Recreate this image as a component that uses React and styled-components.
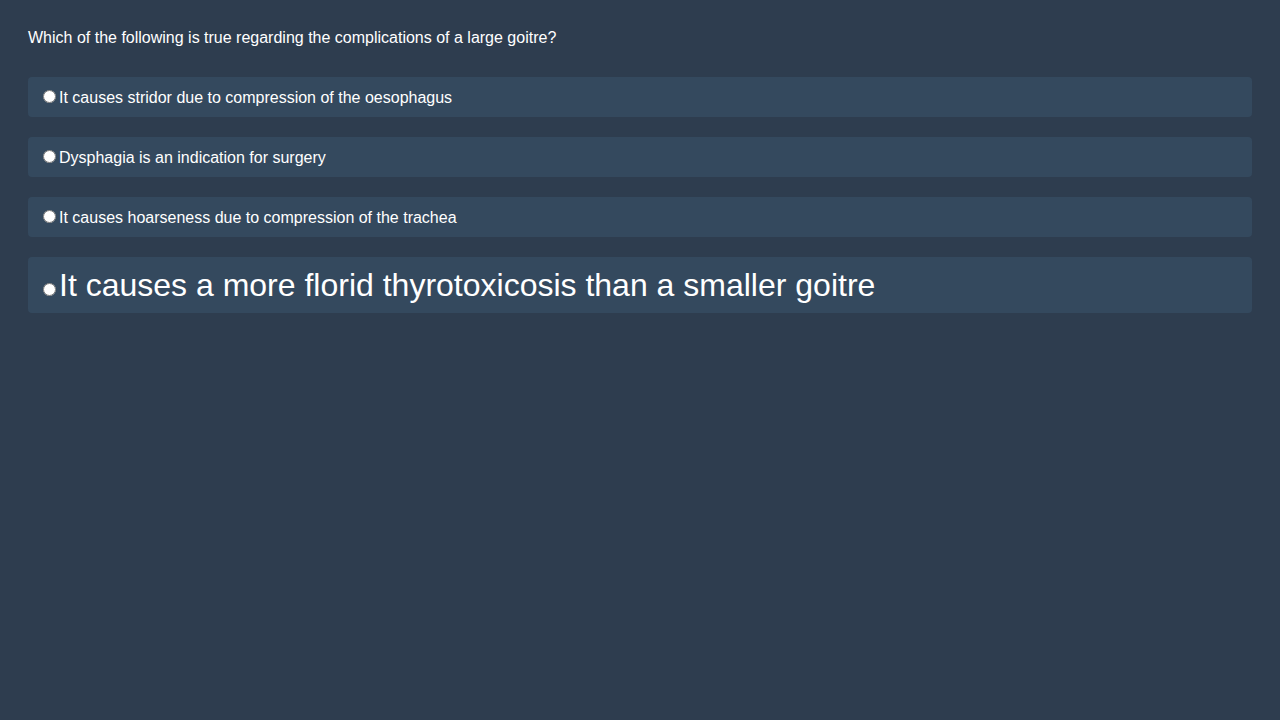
import React from "react";
import styled, { createGlobalStyle } from "styled-components";

const Global = createGlobalStyle`
  html, body {
    margin: 0;
    padding: 0;
    background: #2e3d4f;
    font-family: "Liberation Sans", Arial, sans-serif;
    color: #ffffff;
  }
`;

const Page = styled.div`
  min-height: 720px;
  box-sizing: border-box;
  padding: 29px 28px 28px;
  background: #2e3d4f;
`;

const Question = styled.div`
  font-size: 16px;
  line-height: 18px;
  margin-bottom: 30px;
`;

const Options = styled.div`
  display: flex;
  flex-direction: column;
  gap: 20px;
`;

const Option = styled.label`
  display: block;
  background: #34495e;
  border-radius: 4px;
  padding: 10px;
  font-size: ${(p) => (p.$big ? "32px" : "16px")};
  line-height: ${(p) => (p.$big ? "36px" : "18px")};
  color: #ffffff;
  cursor: pointer;
`;

const Radio = styled.input`
  margin: 3px 3px 0 5px;
`;

const options = [
  { text: "It causes stridor due to compression of the oesophagus" },
  { text: "Dysphagia is an indication for surgery" },
  { text: "It causes hoarseness due to compression of the trachea" },
  { text: "It causes a more florid thyrotoxicosis than a smaller goitre", big: true },
];

export default function App() {
  return (
    <>
      <Global />
      <Page>
        <Question>Which of the following is true regarding the complications of a large goitre?</Question>
        <Options>
          {options.map((o, i) => (
            <Option key={i} $big={o.big}>
              <Radio type="radio" name="answer" />
              {o.text}
            </Option>
          ))}
        </Options>
      </Page>
    </>
  );
}
